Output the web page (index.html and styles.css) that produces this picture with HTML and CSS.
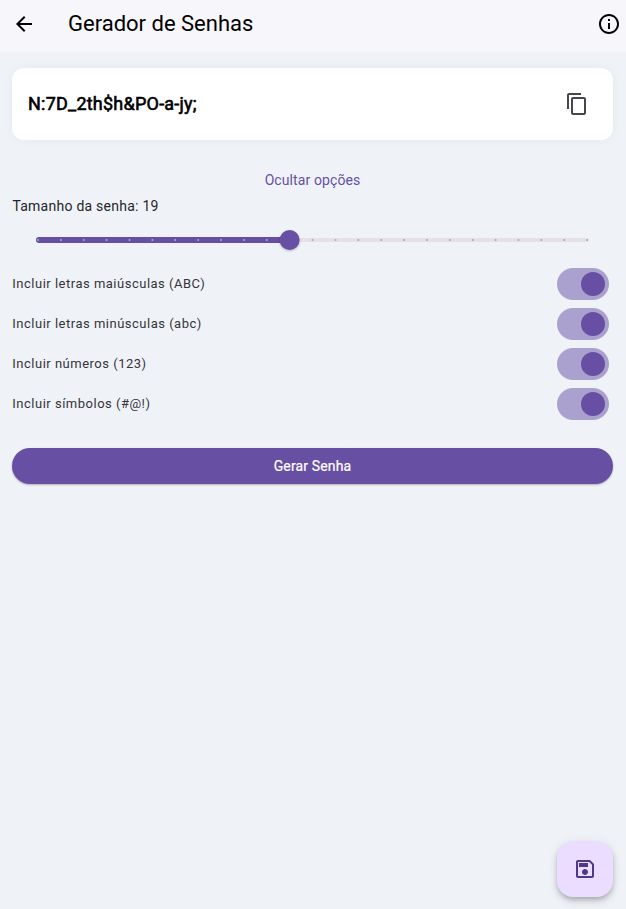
FILE: index.html
```html
<!DOCTYPE html>
<html lang="pt-BR">
<head>
<meta charset="utf-8">
<title>Gerador de Senhas</title>
<link rel="stylesheet" href="styles.css">
</head>
<body>
<header class="appbar">
  <svg class="icon" viewBox="0 0 24 24"><path d="M20 11H7.83l5.59-5.59L12 4l-8 8 8 8 1.41-1.41L7.83 13H20v-2z"/></svg>
  <h1 class="title">Gerador de Senhas</h1>
  <svg class="icon" viewBox="0 0 24 24"><path d="M11 7h2v2h-2zm0 4h2v6h-2zm1-9C6.48 2 2 6.48 2 12s4.480 10 10 10 10-4.480 10-10S17.520 2 12 2zm0 18c-4.410 0-8-3.590-8-8s3.590-8 8-8 8 3.590 8 8-3.590 8-8 8z"/></svg>
</header>
<main class="content">
  <section class="card">
    <span class="password">N:7D_2th$h&amp;PO-a-jy;</span>
    <svg class="icon copy" viewBox="0 0 24 24"><path d="M16 1H4c-1.100 0-2 .9-2 2v14h2V3h12V1zm3 4H8c-1.100 0-2 .9-2 2v14c0 1.100.9 2 2 2h11c1.100 0 2-.9 2-2V7c0-1.100-.9-2-2-2zm0 16H8V7h11v14z"/></svg>
  </section>
  <div class="toggle-options"><span>Ocultar opções</span></div>
  <div class="length"><span>Tamanho da senha: 19</span></div>
  <svg class="slider" viewBox="0 0 553 24">
    <rect class="track" x="240" y="10" width="313" height="4" rx="2"/>
    <rect class="active" x="0" y="9" width="254" height="6" rx="3"/>
    <path class="ticks-on" d="M2 12H252"/>
    <path class="ticks-off" d="M276.625 12H553"/>
    <circle class="thumb" cx="253.600" cy="12" r="10"/>
  </svg>
  <div class="options">
    <div class="option"><span>Incluir letras maiúsculas (ABC)</span><i class="switch"></i></div>
    <div class="option"><span>Incluir letras minúsculas (abc)</span><i class="switch"></i></div>
    <div class="option"><span>Incluir números (123)</span><i class="switch"></i></div>
    <div class="option"><span>Incluir símbolos (#@!)</span><i class="switch"></i></div>
  </div>
  <button class="generate">Gerar Senha</button>
</main>
<button class="fab" aria-label="Salvar">
  <svg class="icon" viewBox="0 0 24 24"><path d="M17 3H5c-1.110 0-2 .9-2 2v14c0 1.100.89 2 2 2h14c1.100 0 2-.9 2-2V7l-4-4zm2 16H5V5h11.170L19 7.830V19zm-7-7c-1.660 0-3 1.340-3 3s1.340 3 3 3 3-1.340 3-3-1.340-3-3-3zM6 6h9v4H6z"/></svg>
</button>
</body>
</html>
```
FILE: styles.css
```css
* { box-sizing: border-box; }
body {
  margin: 0;
  height: 909px;
  overflow: hidden;
  background: #eff3f8;
  color: #1d1b20;
  font-family: Roboto, sans-serif;
}
.icon { width: 24px; height: 24px; flex: none; fill: currentColor; }
.appbar {
  height: 52px;
  padding: 0 5px 4px 12px;
  display: flex;
  align-items: center;
  background: #f7f6fb;
  color: #000;
}
.title {
  flex: 1;
  margin: 0 0 0 32px;
  font-size: 22px;
  line-height: 28px;
  font-weight: 400;
}
.content { padding: 16px 13px 0 12px; }
.card {
  height: 72px;
  padding: 0 24px 0 16px;
  display: flex;
  align-items: center;
  justify-content: space-between;
  background: #fff;
  border-radius: 12px;
  box-shadow: 0 0 10px rgba(0, 0, 0, .045);
}
.password {
  padding-bottom: 2px;
  font-size: 18px;
  font-weight: 400;
  letter-spacing: .23px;
  color: #000;
  -webkit-text-stroke: .6px #000;
}
.copy { color: #49454f; }
.toggle-options {
  margin-top: 30px;
  height: 20px;
  text-align: center;
  font-size: 14px;
  line-height: 20px;
  letter-spacing: .1px;
  color: #674fa3;
}
.length {
  margin-top: 6px;
  padding-left: .4px;
  height: 20px;
  font-size: 14px;
  line-height: 20px;
  letter-spacing: .25px;
  color: #262429;
}
.slider {
  display: block;
  width: 553px;
  height: 24px;
  margin: 12px 0 0 24px;
  overflow: visible;
}
.track { fill: #e6e0e9; }
.active { fill: #674fa3; }
.ticks-on, .ticks-off {
  fill: none;
  stroke-width: 2;
  stroke-linecap: round;
  stroke-dasharray: 0 22.875;
}
.ticks-on { stroke: #b4a8d1; }
.ticks-off { stroke: #aaa4b0; }
.thumb { fill: #674fa3; filter: drop-shadow(0 1px 1px rgba(0, 0, 0, .25)); }
.options { margin-top: 12px; }
.option {
  height: 40px;
  padding: 0 4px 0 .3px;
  display: flex;
  align-items: center;
  justify-content: space-between;
  font-size: 13px;
  letter-spacing: .5px;
  color: #363439;
}
.option span { padding-bottom: 2px; }
.switch {
  width: 52px;
  height: 32px;
  padding: 4px;
  border-radius: 16px;
  background: #aba1cf;
}
.switch::before {
  content: "";
  display: block;
  width: 24px;
  height: 24px;
  margin-left: auto;
  border-radius: 50%;
  background: #674fa3;
}
.generate {
  display: block;
  width: 100%;
  height: 36px;
  margin-top: 24px;
  padding: 0;
  border: 0;
  border-radius: 18px;
  background: #674fa3;
  color: #fff;
  font: 400 14px/20px Roboto, sans-serif;
  letter-spacing: .15px;
  -webkit-text-stroke: .2px #fff;
  box-shadow: 0 1px 2px rgba(0, 0, 0, .28);
}
.fab {
  position: fixed;
  right: 13px;
  bottom: 12px;
  width: 56px;
  height: 56px;
  padding: 0;
  display: grid;
  place-items: center;
  border: 0;
  border-radius: 16px;
  background: #eaddff;
  color: #4f378a;
  box-shadow: 0 3px 5px -1px rgba(0, 0, 0, .2), 0 5px 8px rgba(0, 0, 0, .12), 0 1px 12px rgba(0, 0, 0, .07);
}
```
